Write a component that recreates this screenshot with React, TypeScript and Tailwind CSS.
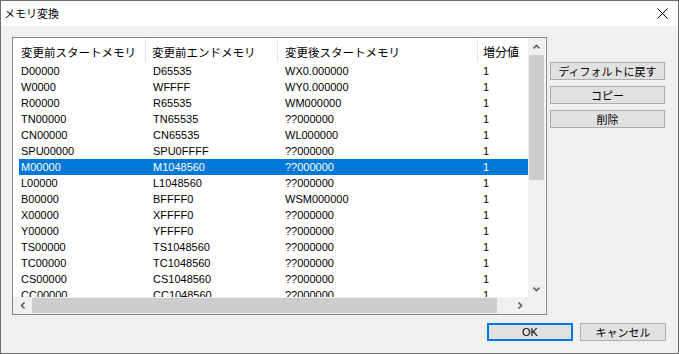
const rows: string[][] = [
  ['D00000', 'D65535', 'WX0.000000', '1'],
  ['W0000', 'WFFFF', 'WY0.000000', '1'],
  ['R00000', 'R65535', 'WM000000', '1'],
  ['TN00000', 'TN65535', '??000000', '1'],
  ['CN00000', 'CN65535', 'WL000000', '1'],
  ['SPU00000', 'SPU0FFFF', '??000000', '1'],
  ['M00000', 'M1048560', '??000000', '1'],
  ['L00000', 'L1048560', '??000000', '1'],
  ['B00000', 'BFFFF0', 'WSM000000', '1'],
  ['X00000', 'XFFFF0', '??000000', '1'],
  ['Y00000', 'YFFFF0', '??000000', '1'],
  ['TS00000', 'TS1048560', '??000000', '1'],
  ['TC00000', 'TC1048560', '??000000', '1'],
  ['CS00000', 'CS1048560', '??000000', '1'],
  ['CC00000', 'CC1048560', '??000000', '1'],
]

const SELECTED = 6

function Chevron({ dir }: { dir: 'up' | 'down' | 'left' | 'right' }) {
  const pts = {
    up: '0.5,4.5 3.5,1.5 6.5,4.5',
    down: '0.5,1.5 3.5,4.5 6.5,1.5',
    left: '4.5,0.5 1.5,3.5 4.5,6.5',
    right: '1.5,0.5 4.5,3.5 1.5,6.5',
  }[dir]
  const vertical = dir === 'up' || dir === 'down'
  return (
    <svg width={vertical ? 7 : 6} height={vertical ? 6 : 7} viewBox={vertical ? '0 0 7 6' : '0 0 6 7'}>
      <polyline points={pts} fill="none" stroke="#606060" strokeWidth="1.6" />
    </svg>
  )
}

function Btn({ children, className = '' }: { children: React.ReactNode; className?: string }) {
  return (
    <div className={`flex items-center justify-center bg-[#e1e1e1] border border-[#adadad] text-[11px] text-black ${className}`}>
      {children}
    </div>
  )
}

export default function App() {
  return (
    <div
      className="w-[679px] h-[354px] border border-[#6e6e6e] bg-[#f0f0f0] flex flex-col overflow-hidden text-black"
      style={{ fontFamily: '"Liberation Sans", "Noto Sans CJK JP", sans-serif' }}
    >
      {/* title bar */}
      <div className="h-[25px] bg-white flex items-center justify-between pl-[3px] pr-[10px]">
        <span className="text-[11px] leading-none" style={{ fontFamily: '"Noto Sans CJK JP", sans-serif' }}>メモリ変換</span>
        <svg width="11" height="11" viewBox="0 0 11 11">
          <path d="M0.5 0.5 L10.5 10.5 M10.5 0.5 L0.5 10.5" stroke="#000" strokeWidth="1" />
        </svg>
      </div>

      <div className="flex flex-col pl-[11px] pr-[12px] pt-[11px]">
        <div className="flex gap-[3px]">
          {/* list view */}
          <div className="w-[535px] h-[278px] border border-[#828790] bg-white flex flex-col">
            <div className="flex h-[259px]">
              <div className="w-[515px] h-full overflow-hidden">
                <div className="h-[25px] flex ml-[6px] items-center text-[11.5px] leading-[16px]" style={{ fontFamily: '"Noto Sans CJK JP", sans-serif' }}>
                  <div className="w-[127px] h-[23px] pl-[2px] pt-[5px] border-r border-[#e5e5e5] whitespace-nowrap overflow-hidden">変更前スタートメモリ</div>
                  <div className="w-[132px] h-[23px] pl-[6px] pt-[5px] border-r border-[#e5e5e5]">変更前エンドメモリ</div>
                  <div className="w-[200px] h-[23px] pl-[7px] pt-[5px] border-r border-[#e5e5e5]">変更後スタートメモリ</div>
                  <div className="pl-[5px] h-[23px] pt-[5px] text-[12px]">増分値</div>
                </div>
                {rows.map((r, i) => (
                  <div
                    key={i}
                    className={`h-[16px] leading-[16px] flex ml-[6px] w-[509px] text-[11px] whitespace-nowrap ${i === SELECTED ? 'bg-[#0078d7] text-white' : ''}`}
                  >
                    <div className="w-[127px] pl-[2px]">{r[0]}</div>
                    <div className="w-[132px] pl-[7px]">{r[1]}</div>
                    <div className="w-[200px] pl-[7px]">{r[2]}</div>
                    <div className="pl-[5px]">{r[3]}</div>
                  </div>
                ))}
              </div>
              {/* vertical scrollbar */}
              <div className="w-[17px] h-full bg-[#f0f0f0] flex flex-col">
                <div className="h-[17px] flex items-center justify-center"><Chevron dir="up" /></div>
                <div className="h-[125px] mx-[1px] bg-[#cdcdcd]" />
                <div className="flex-1" />
                <div className="h-[17px] flex items-center justify-center"><Chevron dir="down" /></div>
              </div>
            </div>
            {/* horizontal scrollbar */}
            <div className="flex h-[17px]">
              <div className="w-[515px] h-full bg-[#f0f0f0] flex items-center">
                <div className="w-[19px] h-full flex items-center justify-center"><Chevron dir="left" /></div>
                <div className="w-[465px] h-[15px] bg-[#cdcdcd]" />
                <div className="flex-1 h-full flex items-center justify-end pr-[5px]"><Chevron dir="right" /></div>
              </div>
              <div className="w-[17px] h-full bg-[#f0f0f0]" />
            </div>
          </div>

          {/* side buttons */}
          <div className="flex flex-col gap-[6px] pt-[25px]" style={{ fontFamily: '"Noto Sans CJK JP", sans-serif' }}>
            <Btn className="w-[115px] h-[18px]">ディフォルトに戻す</Btn>
            <Btn className="w-[115px] h-[18px]">コピー</Btn>
            <Btn className="w-[115px] h-[18px]">削除</Btn>
          </div>
        </div>

        {/* bottom buttons */}
        <div className="flex justify-end gap-[7px] mt-[8px]">
          <div className="w-[86px] h-[18px] flex items-center justify-center bg-[#e1e1e1] border-2 border-[#0078d7] text-[11px]">OK</div>
          <Btn className="w-[86px] h-[18px]">
            <span style={{ fontFamily: '"Noto Sans CJK JP", sans-serif' }}>キャンセル</span>
          </Btn>
        </div>
      </div>
    </div>
  )
}
